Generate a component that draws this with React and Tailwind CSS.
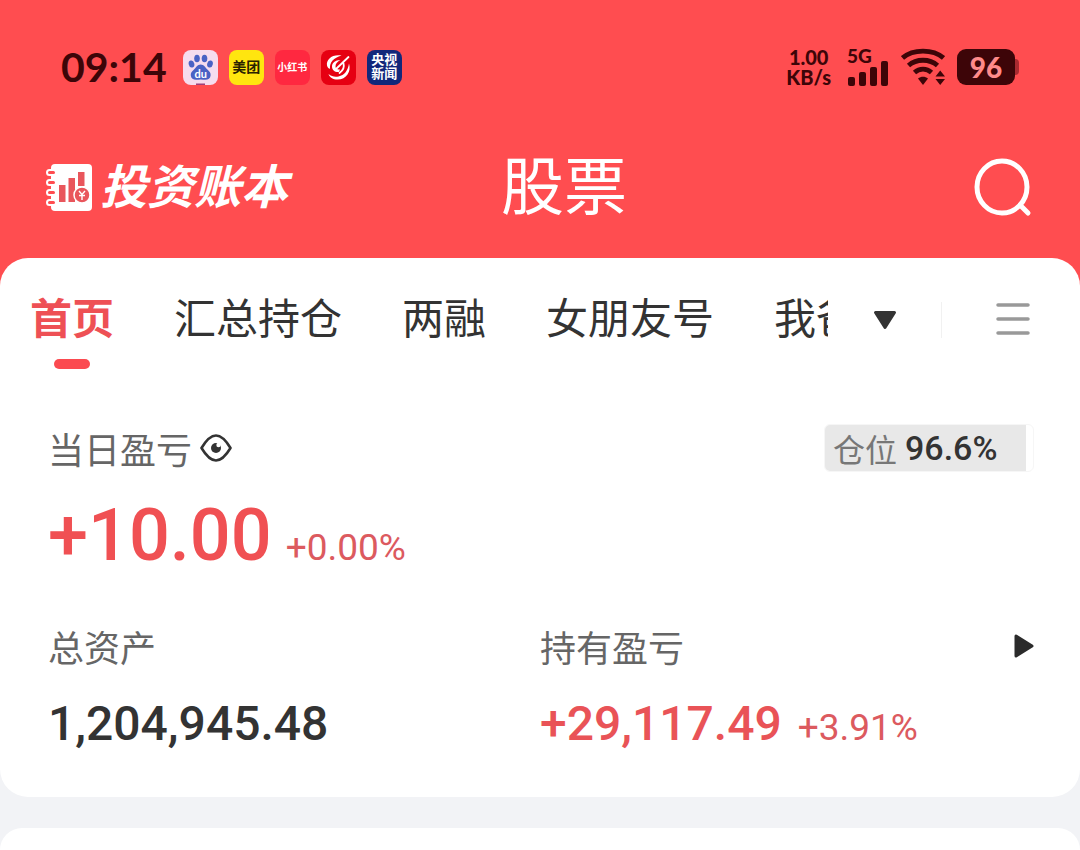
import { useState } from "react";

const tabs = ["首页", "汇总持仓", "两融", "女朋友号", "我爸"];
const position = 96.6;

function BaiduIcon() {
  return (
    <svg viewBox="0 0 35 35" className="size-[35px] shrink-0">
      <rect width="35" height="35" rx="8" fill="#f6dcee" />
      <g fill="#4a62c4">
        <ellipse cx="8.500" cy="14" rx="2.800" ry="3.600" transform="rotate(-15 8.500 14)" />
        <ellipse cx="14" cy="8.500" rx="2.800" ry="3.800" />
        <ellipse cx="21.500" cy="8.500" rx="2.800" ry="3.800" />
        <ellipse cx="27" cy="14" rx="2.800" ry="3.600" transform="rotate(15 27 14)" />
        <path d="M17.700 14.500c-3.200 0-4.700 3-6.700 5-2.200 2-3.500 3.500-3.200 6 .3 3 2.500 4.200 5.200 4.200 1.700 0 3-.3 4.700-.3s3 .3 4.700.3c2.700 0 4.900-1.200 5.200-4.200.3-2.500-1-4-3.200-6-2-2-3.500-5-6.700-5z" />
        <path d="M13 33.500h9v1.500h-9z" fill="#a0407a" />
      </g>
      <text x="17.700" y="27.500" fontSize="11" fontWeight="700" fill="#fff" textAnchor="middle" fontFamily="Lato, sans-serif">du</text>
    </svg>
  );
}

function StockIcon() {
  return (
    <svg viewBox="0 0 35 35" className="size-[35px] shrink-0">
      <rect width="35" height="35" rx="8" fill="#e60012" />
      <path d="M20.500 5.500C11 4 5 9.500 6 15.500c.4 2 1.500 3 3 3.200C8.500 12 12.500 8 20.500 5.500z" fill="#fff" />
      <path d="M19.500 10c-5.500 0-8.500 3-8.500 6.500s3 6 7 5.500l1-2.500c-2.500.5-4.500-.8-4.500-3.200 0-2.800 2-4.800 5-6.300z" fill="#fff" />
      <path d="M28 13.500c2.500 8-2.500 16-11.500 16-4.500 0-8-2-9-5.500 3 2.500 6.500 3.300 10 2.500 6-1.300 9.500-6 10.500-13z" fill="#fff" />
      <path d="M27.500 7 14.500 19.500M22.500 13.500c1 3.500-.5 7-4 9.500" fill="none" stroke="#fff" strokeWidth="1.800" strokeLinecap="round" />
    </svg>
  );
}

function SignalIcon() {
  return (
    <svg viewBox="0 0 42 26" className="h-[26px] w-[42px]" fill="#3d0508">
      <rect x="1" y="17" width="7" height="9" rx="2" />
      <rect x="12" y="12" width="7" height="14" rx="2" />
      <rect x="23" y="7" width="7" height="19" rx="2" />
      <rect x="34" y="1" width="7" height="25" rx="2" />
    </svg>
  );
}

function WifiIcon() {
  return (
    <svg viewBox="0 0 44 38" className="h-[38px] w-11">
      <g fill="none" stroke="#3d0508" strokeWidth="4.800">
        <path d="M1.500 10C12 .8 32 .8 42.500 10" />
        <path d="M7.500 17.500c8-7 21-7 29 0" />
        <path d="M13.500 24.500c5-4.500 12-4.500 17 0" />
      </g>
      <g fill="#3d0508">
        <path d="M17 30.500c3-2.300 7-2.300 10 0L22 37z" />
        <path d="M34.500 28.500h9.500l-4.800-6zM34.500 31H44l-4.800 6z" />
      </g>
    </svg>
  );
}

function LedgerIcon() {
  return (
    <svg viewBox="0 0 46 48" className="h-12 w-[46px]">
      <path d="M9 0h33a4 4 0 0 1 4 4v39a4 4 0 0 1-4 4H9a4 4 0 0 1-4-4V4a4 4 0 0 1 4-4z" fill="#fff" />
      {[6, 16, 26, 36].map((y) => (
        <rect key={y} x="1" y={y} width="9" height="5" rx="2.500" fill="#ff4d50" stroke="#fff" strokeWidth="2" />
      ))}
      <g fill="#e9565c">
        <rect x="13" y="21" width="6.500" height="17" />
        <rect x="22.500" y="14" width="6.500" height="24" />
        <rect x="32" y="8" width="6.500" height="14" />
      </g>
      <circle cx="36" cy="31" r="8" fill="#e9565c" stroke="#fff" strokeWidth="1.500" />
      <path d="m33 27 3 3.500 3-3.500M36 30.500V36M33 31.500h6" stroke="#fff" strokeWidth="1.400" fill="none" />
    </svg>
  );
}

function StatusBar() {
  return (
    <div className="flex h-[50px] items-center justify-between px-[61px] text-[#3d0508]">
      <div className="flex items-center gap-4">
        <span className="font-['Lato',sans-serif] text-[41px] leading-[50px] font-bold">09:14</span>
        <div className="flex items-center gap-[11px] font-bold">
          <BaiduIcon />
          <span className="flex size-[35px] items-center justify-center rounded-lg bg-[#ffe50f] text-sm text-[#2a2200]">美团</span>
          <span className="flex size-[35px] items-center justify-center rounded-lg bg-[#ff2840] text-[10px] text-white">小红书</span>
          <StockIcon />
          <span className="flex size-[35px] items-center justify-center rounded-lg bg-[#12277a] text-center text-[13px] leading-[14px] text-white">
            央视
            <br />
            新闻
          </span>
        </div>
      </div>
      <div className="flex items-center gap-3">
        <div className="flex flex-col items-center font-['Lato',sans-serif] text-xl leading-5 font-black">
          <span>1.00</span>
          <span>KB/s</span>
        </div>
        <div className="relative ml-1 flex h-[38px] items-end">
          <span className="absolute -top-1 left-0 font-['Lato',sans-serif] text-[19px] leading-6 font-black">5G</span>
          <SignalIcon />
        </div>
        <WifiIcon />
        <div className="flex items-center">
          <span className="flex h-9 w-[58px] items-center justify-center rounded-[9px] bg-[#3d0508] font-['Lato',sans-serif] text-[28px] font-black text-[#ff8a8a]">
            96
          </span>
          <span className="h-4 w-1 rounded-r bg-[#a82a30]" />
        </div>
      </div>
    </div>
  );
}

export default function App() {
  const [active, setActive] = useState("首页");
  const [visible, setVisible] = useState(true);

  const show = (value) => (visible ? value : "****");

  return (
    <div className="flex min-h-screen flex-col bg-[#f2f3f6] font-['Roboto','Noto_Sans_CJK_SC',sans-serif] text-[#333]">
      <header className="bg-[#ff4d50] pt-[42px] pb-[58px]">
        <StatusBar />
        <div className="mt-[52px] grid h-[88px] grid-cols-[1fr_auto_1fr] items-center px-[46px] text-white">
          <div className="flex items-center gap-2">
            <LedgerIcon />
            <span className="text-[47px] leading-[60px] font-bold italic">投资账本</span>
          </div>
          <h1 className="ml-12 text-[63px] leading-[88px]">股票</h1>
          <button aria-label="搜索" className="justify-self-end">
            <svg viewBox="0 0 60 60" className="size-[60px]" fill="none" stroke="#fff" strokeWidth="5" strokeLinecap="round">
              <ellipse cx="28" cy="29" rx="25" ry="26" />
              <path d="m46 47 8 8" />
            </svg>
          </button>
        </div>
      </header>

      <main className="relative -mt-8 flex flex-1 flex-col">
        <section className="rounded-[28px] bg-white pt-8 pb-[43px]">
          <div className="flex items-start">
            <nav className="flex min-w-0 flex-1 gap-[60px] overflow-hidden pl-[30px]">
              {tabs.map((tab) => (
                <button
                  key={tab}
                  onClick={() => setActive(tab)}
                  className="flex shrink-0 flex-col items-center gap-[9px] text-[42px] leading-[60px]"
                >
                  <span className={tab === active ? "font-bold text-[#ee5055]" : ""}>{tab}</span>
                  <span className={tab === active ? "h-[10px] w-9 rounded-full bg-[#fb4a50]" : "h-[10px]"} />
                </button>
              ))}
            </nav>
            <div className="flex h-[60px] shrink-0 items-center pr-[50px] pl-[45px]">
              <button aria-label="展开">
                <svg viewBox="0 0 24 20" className="h-5 w-6">
                  <path d="M2.500 2.500h19L12 17.500z" fill="#333" stroke="#333" strokeWidth="3" strokeLinejoin="round" />
                </svg>
              </button>
              <span className="ml-11 h-9 w-px bg-[#f1f1f1]" />
              <button aria-label="菜单" className="ml-[54px]">
                <svg viewBox="0 0 34 34" className="size-[34px]" stroke="#999" strokeWidth="3.500" strokeLinecap="round">
                  <path d="M2 2h30M2 16h30M2 30h30" />
                </svg>
              </button>
            </div>
          </div>

          <div className="mt-[55px] px-12">
            <div className="flex items-center justify-between">
              <div className="flex items-center gap-2 text-[36px] leading-[48px] text-[#666]">
                <span className="font-['Noto_Sans_CJK_SC',sans-serif]">当日盈亏</span>
                <button aria-label="显示金额" onClick={() => setVisible(!visible)}>
                  <svg viewBox="0 0 32 28" className="h-7 w-8">
                    <path d="M1.500 14C4.500 9 10 1.500 16 1.500S27.500 9 30.500 14C27.500 19 22 26.500 16 26.500S4.500 19 1.500 14z" fill="none" stroke="#333" strokeWidth="2.600" strokeLinejoin="round" />
                    <circle cx="16" cy="14" r="5" fill="#333" />
                    <circle cx="18.500" cy="11" r="2.200" fill="#fff" />
                  </svg>
                </button>
              </div>
              <div className="relative -mr-0.5 h-12 w-[210px] overflow-hidden rounded-md border border-[#f6f6f6]">
                <div className="absolute inset-y-0 left-0 bg-[#e8e8e8]" style={{ width: `${position}%` }} />
                <div className="relative flex h-full items-center gap-2 pl-2">
                  <span className="font-['Noto_Sans_CJK_SC',sans-serif] text-[32px] leading-[48px] text-[#777]">仓位</span>
                  <span className="text-[34px] leading-[48px] font-medium">{position}%</span>
                </div>
              </div>
            </div>

            <div className="mt-6 flex items-baseline gap-3.5 text-[#f05053]">
              <span className="text-[72px] leading-[80px] font-medium">{show("+10.00")}</span>
              <span className="text-[37px] leading-[48px] text-[#dc5a5f]">{show("+0.00%")}</span>
            </div>

            <div className="mt-[46px] grid grid-cols-2">
              <div>
                <p className="font-['Noto_Sans_CJK_SC',sans-serif] text-[36px] leading-[48px] text-[#666]">总资产</p>
                <p className="mt-6 text-[48px] leading-[60px] font-medium">{show("1,204,945.48")}</p>
              </div>
              <div>
                <div className="flex items-center justify-between">
                  <p className="font-['Noto_Sans_CJK_SC',sans-serif] text-[36px] leading-[48px] text-[#666]">持有盈亏</p>
                  <button aria-label="查看持有盈亏" className="-mr-0.5">
                    <svg viewBox="0 0 20 24" className="h-6 w-5">
                      <path d="M2 2v20L18 12z" fill="#2b2b2b" stroke="#2b2b2b" strokeWidth="3" strokeLinejoin="round" />
                    </svg>
                  </button>
                </div>
                <p className="mt-6 flex items-baseline gap-4 text-[#e95357]">
                  <span className="text-[48px] leading-[60px] font-medium">{show("+29,117.49")}</span>
                  <span className="text-[37px] leading-[48px] text-[#dc5a5f]">{show("+3.91%")}</span>
                </p>
              </div>
            </div>
          </div>
        </section>

        <section className="mt-[31px] flex-1 rounded-t-[28px] bg-white" />
      </main>
    </div>
  );
}
